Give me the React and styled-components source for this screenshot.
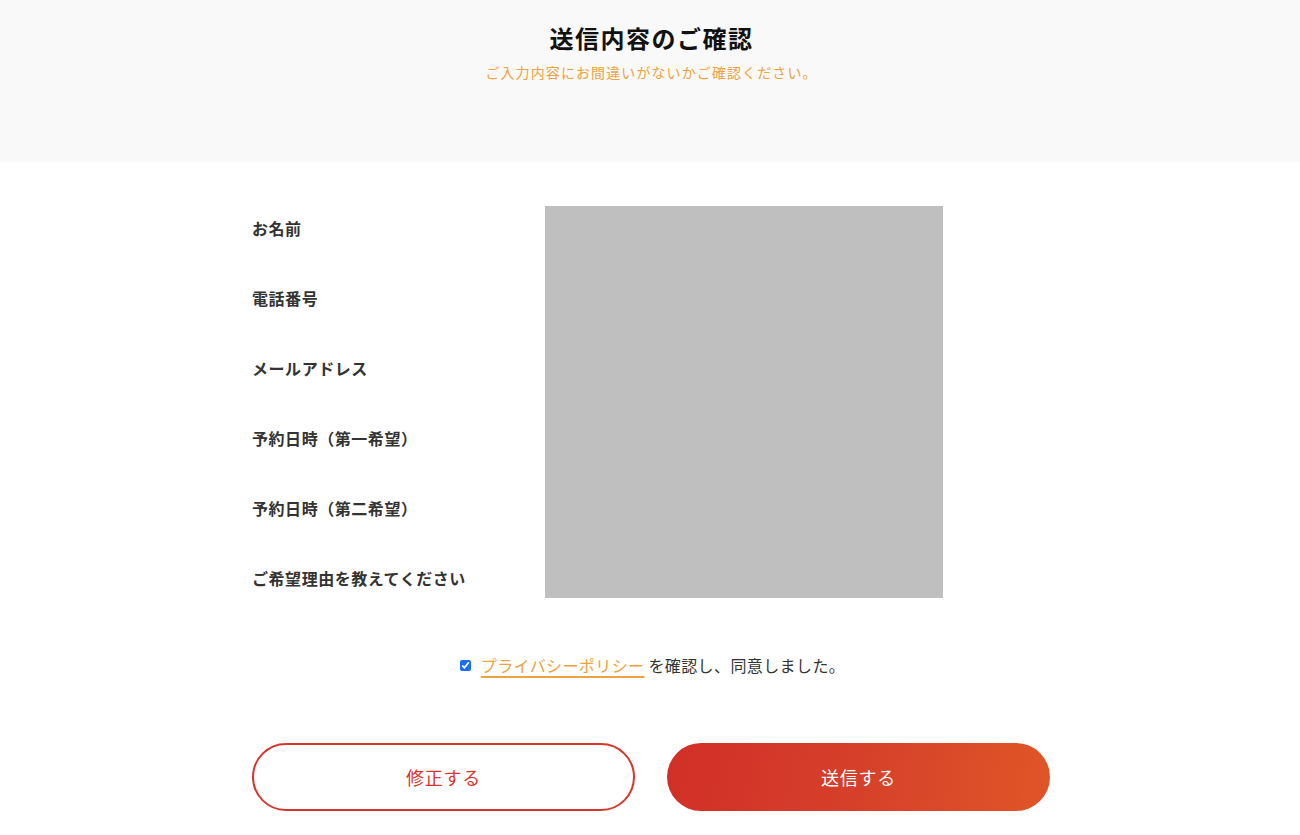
import styled, { createGlobalStyle } from 'styled-components';

const GlobalStyle = createGlobalStyle`
  * {
    box-sizing: border-box;
  }
  body {
    margin: 0;
    background: #fff;
    font-family: "Noto Sans CJK JP", "Noto Sans", sans-serif;
    color: #333;
  }
`;

const Header = styled.header`
  height: 162px;
  background: #f9f9f9;
  padding: 20px 0 0 3px;
  text-align: center;
`;

const Title = styled.h1`
  margin: 0;
  font-size: 24px;
  line-height: 36px;
  font-weight: 700;
  color: #111;
  letter-spacing: 1.5px;
`;

const Lead = styled.p`
  margin: 6px 0 0;
  font-size: 14px;
  line-height: 20px;
  color: #f0a23c;
  letter-spacing: 1.1px;
`;

const Main = styled.main`
  width: 800px;
  margin: 0 auto;
  padding: 44px 0 0 2px;
`;

const Table = styled.div`
  display: grid;
  grid-template-columns: 293px 398px;
`;

const Labels = styled.dl`
  margin: 0;
  display: flex;
  flex-direction: column;
`;

const Label = styled.dt`
  height: 70px;
  padding-top: 11px;
  font-size: 16px;
  line-height: 22px;
  font-weight: 700;
  color: #333;
  letter-spacing: 0.55px;

  &:last-child {
    height: 42px;
  }
`;

const Masked = styled.div`
  height: 392px;
  background: #bfbfbf;
`;

const Agree = styled.label`
  margin: 55px 0 0 3px;
  display: flex;
  justify-content: center;
  align-items: center;
  gap: 8px;
  font-size: 16px;
  line-height: 24px;
  color: #333;
  letter-spacing: 0.4px;
`;

const Check = styled.input`
  width: 11px;
  height: 11px;
  margin: 0 2px 0 0;
  accent-color: #1a6ef5;
`;

const PolicyLink = styled.a`
  color: #f0a23c;
  text-decoration: underline;
  text-decoration-thickness: 1.5px;
  text-underline-offset: 4px;
`;

const Buttons = styled.div`
  margin-top: 66px;
  display: flex;
  gap: 32px;
`;

const Button = styled.button`
  flex: 1;
  height: 68px;
  border-radius: 34px;
  font-family: inherit;
  font-size: 18px;
  letter-spacing: 0.8px;
  cursor: pointer;
  border: 2px solid ${(p) => (p.$primary ? 'transparent' : '#d8352c')};
  background: ${(p) =>
    p.$primary ? 'linear-gradient(100deg, #d12f27 0%, #d6402a 50%, #e05627 100%)' : '#fff'};
  background-origin: border-box;
  color: ${(p) => (p.$primary ? '#fff' : '#d8352c')};
`;

const labels = [
  'お名前',
  '電話番号',
  'メールアドレス',
  '予約日時（第一希望）',
  '予約日時（第二希望）',
  'ご希望理由を教えてください',
];

const App = () => {
  return (
    <>
      <GlobalStyle />
      <Header>
        <Title>送信内容のご確認</Title>
        <Lead>ご入力内容にお間違いがないかご確認ください。</Lead>
      </Header>
      <Main>
        <Table>
          <Labels>
            {labels.map((l) => (
              <Label key={l}>{l}</Label>
            ))}
          </Labels>
          <Masked />
        </Table>
        <Agree>
          <Check type="checkbox" defaultChecked />
          <span>
            <PolicyLink href="#">プライバシーポリシー</PolicyLink> を確認し、同意しました。
          </span>
        </Agree>
        <Buttons>
          <Button type="button">修正する</Button>
          <Button type="submit" $primary>
            送信する
          </Button>
        </Buttons>
      </Main>
    </>
  );
};

export default App;
